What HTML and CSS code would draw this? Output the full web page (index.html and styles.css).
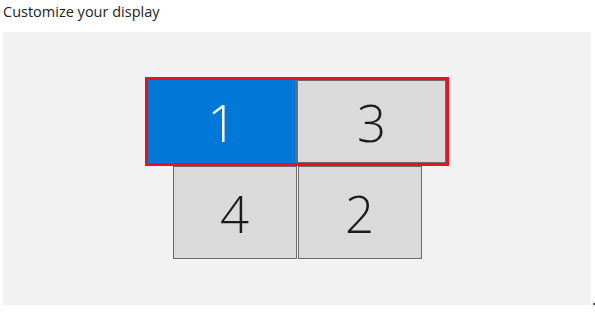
FILE: index.html
```html
<!DOCTYPE html>
<html lang="en">
<head>
    <meta charset="UTF-8">
    <title>Customize your display</title>
    <link rel="stylesheet" href="styles.css">
</head>
<body>
    <h1 class="title">Customize your display</h1>

    <div class="canvas">
        <!-- selected pair -->
        <div class="row selected">
            <div class="monitor active m1">1</div>
            <div class="monitor m3">3</div>
        </div>
        <div class="row">
            <div class="monitor m4">4</div>
            <div class="monitor m2">2</div>
        </div>
    </div>
    <span class="dot"></span>
</body>
</html>
```

FILE: styles.css
```css
body {
    margin: 0;
    background: #fff;
    font-family: "Open Sans", "Noto Sans", sans-serif;
    position: relative;
    width: 595px;
    height: 314px;
    overflow: hidden;
}
.title {
    margin: 0;
    padding: 3px 0 0 3px;
    height: 29px;
    box-sizing: border-box;
    font-size: 14.5px;
    font-weight: 400;
    color: #222;
    line-height: 18px;
}
.canvas {
    margin-left: 3px;
    width: 588px;
    height: 273px;
    margin-top: 3px;
    background: #f2f2f2;
    display: flex;
    flex-direction: column;
    align-items: center;
    padding-top: 45px;
    box-sizing: border-box;
}
.row {
    display: flex;
}
.row.selected {
    border: 3px solid #e8111c;
}
.monitor {
    box-sizing: border-box;
    border: 1px solid #6b6b6b;
    background: #dadada;
    color: #1b1b1b;
    display: flex;
    align-items: center;
    justify-content: center;
    font-size: 51px;
    font-weight: 300;
}
.m1, .m3 {
    width: 149px;
    height: 83px;
}
.m4, .m2 {
    width: 124px;
    height: 93px;
}
.m4 {
    margin-right: 1px;
}
.active {
    background: #0078d7;
    color: #fff;
    border-color: #0078d7 #6b6b6b #0078d7 #0078d7;
    border-right-width: 2px;
}
.dot {
    position: absolute;
    left: 593px;
    top: 303px;
    width: 2px;
    height: 2px;
    background: #555;
}
```
